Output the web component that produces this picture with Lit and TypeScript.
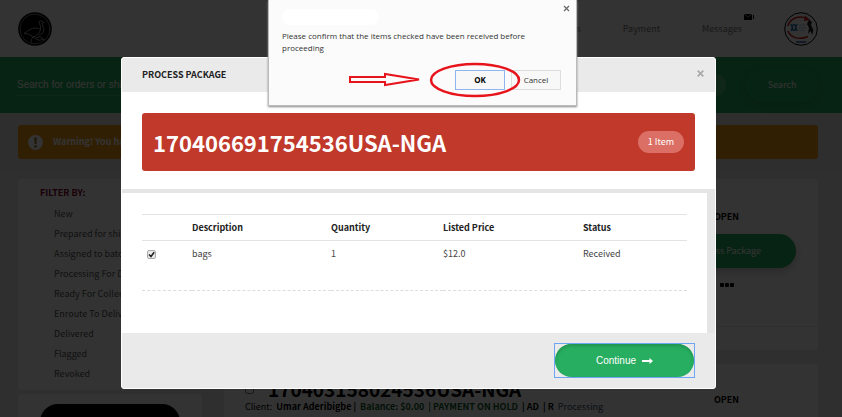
import { LitElement, html, css } from "lit";
import { customElement } from "lit/decorators.js";

const FILTERS = [
  "New",
  "Prepared for shipping",
  "Assigned to batch",
  "Processing For Delivery",
  "Ready For Collection",
  "Enroute To Delivery",
  "Delivered",
  "Flagged",
  "Revoked",
];

const base = css`
  :host {
    --sans: "Noto Sans CJK SC", "Noto Sans", sans-serif;
    --arial: "Liberation Sans", Arial, sans-serif;
    --green: #27ae60;
    font-family: var(--sans);
    box-sizing: border-box;
  }
  *,
  *::before,
  *::after {
    box-sizing: border-box;
  }
  button {
    font: inherit;
    cursor: pointer;
  }
`;

@customElement("order-page")
class OrderPage extends LitElement {
  static styles = [
    base,
    css`
      :host {
        display: block;
        background: #ececec;
        color: #222;
        font-size: 9px;
        line-height: 16px;
      }
      .top {
        display: flex;
        align-items: center;
        height: 57px;
        padding: 0 24px 0 18px;
        background: #fff;
      }
      .logo {
        display: block;
        width: 34px;
        height: 34px;
      }
      .links {
        display: flex;
        align-items: center;
        gap: 42px;
        margin-left: auto;
        margin-right: 42px;
      }
      .links a {
        position: relative;
        color: #777;
        text-decoration: none;
      }
      .mail {
        position: absolute;
        left: 100%;
        top: -7px;
        margin-left: 2px;
        width: 10px;
        height: 6px;
      }
      .search {
        display: flex;
        align-items: center;
        gap: 20px;
        height: 56px;
        padding: 0 24px 0 17px;
        background: var(--green);
      }
      .search input {
        flex: 1;
        min-width: 0;
        height: 21px;
        padding: 0;
        border: 0;
        border-bottom: 1px solid #4cbf7d;
        background: none;
        color: #fff;
        font: 10px/20px var(--arial);
      }
      .search input::placeholder {
        color: #fff;
        opacity: 1;
      }
      .round {
        width: 22px;
        height: 22px;
        padding: 0;
        border: 0;
        border-radius: 50%;
        background: #4cbf7d;
      }
      .go {
        width: 72px;
        height: 34px;
        padding: 0;
        border: 0;
        border-radius: 17px;
        background: var(--green);
        color: #fff;
        box-shadow: 0 3px 8px #22994f;
      }
      .notice {
        padding: 12px 24px 12px 18px;
        background: #e6e6e6;
      }
      .alert {
        display: flex;
        align-items: center;
        gap: 10px;
        height: 34px;
        padding: 0 10px;
        border-radius: 3px;
        background: #f39c12;
        color: #fff;
        font-weight: 700;
      }
      .bang {
        width: 15px;
        height: 15px;
      }
      .cols {
        display: grid;
        grid-template-columns: 184px minmax(0, 1fr) 183px;
        padding: 8px 24px 0 18px;
        align-items: start;
      }
      .stack {
        display: grid;
        gap: 4px;
      }
      .stack.wide {
        gap: 14px;
      }
      .card {
        background: #fff;
        border-radius: 3px;
      }
      .filters {
        height: 211px;
        padding: 6px 22px;
      }
      h2 {
        margin: 0;
        font-size: 9px;
        line-height: 16px;
        color: #800020;
      }
      ul {
        margin: 3px 0 0;
        padding: 0 0 0 14px;
        list-style: none;
      }
      li {
        height: 20px;
        line-height: 20px;
        white-space: nowrap;
      }
      li a {
        color: #555;
        text-decoration: none;
      }
      .create {
        padding: 10px 22px;
      }
      .dark {
        display: block;
        width: 100%;
        height: 36px;
        border: 0;
        border-radius: 18px;
        background: #000;
      }
      .order {
        margin-left: 22px;
        height: 260px;
        padding: 200px 21px 0;
      }
      .number {
        display: flex;
        align-items: center;
        gap: 14px;
        height: 20px;
      }
      .number input {
        margin: 0;
        width: 9px;
        height: 9px;
      }
      .number strong {
        font-size: 19px;
        line-height: 20px;
        color: #000;
      }
      .client {
        display: flex;
        gap: 4px;
        white-space: nowrap;
        font-weight: 700;
        color: #000;
      }
      .client .light {
        font-weight: 400;
      }
      .pay {
        color: #0b5a26;
      }
      .state {
        color: #34495e;
        font-weight: 400;
      }
      .side {
        display: grid;
        justify-items: center;
        align-content: start;
        padding: 30px 22px 0;
        color: #000;
      }
      .open {
        font-weight: 700;
        line-height: 16px;
      }
      .tall {
        height: 171px;
      }
      .rule {
        justify-self: stretch;
        height: 1px;
        margin: 39px -22px 0;
        background: #e6e6e6;
      }
      .short {
        height: 100px;
        padding-top: 28px;
      }
      .process {
        width: 100%;
        height: 34px;
        margin: 9px 0;
        padding: 0;
        border: 0;
        border-radius: 17px;
        background: var(--green);
        color: #fff;
        box-shadow: 0 4px 8px #ccc;
      }
      .dots {
        display: flex;
        gap: 1px;
        margin-top: 6px;
      }
      .dots i {
        width: 4px;
        height: 4px;
        border-radius: 1px;
        background: #000;
      }
    `,
  ];

  render() {
    return html`
      <header class="top">
        <svg class="logo" viewBox="0 0 34 34" fill="none" stroke="#aaa" stroke-width=".9" stroke-linecap="round" stroke-linejoin="round">
          <circle cx="17" cy="17" r="16.8" fill="#000" stroke="none" />
          <circle cx="17" cy="17" r="15" stroke-width=".7" />
          <path d="M26 10.500 24 9.800C23.600 8.200 21.300 8.200 21.200 10.200 21.200 12.500 23.600 14 22.500 17.500M24 11C24 13.500 26.500 15.500 25.500 19 24.800 21.500 23 22.500 21 23M22.500 17.500C20 15.500 15 15.500 12 17.500 9.500 19 7.500 20.500 6 21.500 9 21.500 11 22 13 23.500M22.500 17.500C22 21 18 24.500 15 25 13.500 27 13 28.500 13 30.500M13 23.500C16 25 18 28 21 28.200L26 27.500M18 26 22 24.500 26 27.500" />
        </svg>
        <nav class="links">
          <a href="#">Orders</a>
          <a href="#">Payment</a>
          <a href="#">Messages<svg class="mail" viewBox="0 0 10 6"><path d="M0 0H8V6H0ZM9 1H10V5H9Z" fill="#000" /><path d="M0 0 4 3 8 0" fill="none" stroke="#aaa" stroke-width=".8" /></svg></a>
        </nav>
        <svg class="logo" viewBox="0 0 34 34" fill="none">
          <circle cx="17" cy="17" r="16.300" fill="#fff" stroke="#000" />
          <path d="M4 14C6 6 15 3 23 6.500" stroke="#d0201c" stroke-width="1.500" />
          <path d="M21 3.500 26 8 20 9Z" fill="#d0201c" />
          <path d="M4 19C7 26.500 16 28 24 24.500" stroke="#d0201c" stroke-width="1.500" />
          <path d="M7 12 9.500 19M9.500 12 7 19M10.500 12 13 19M13 12 10.500 19" stroke="#146aa8" stroke-width="1.200" />
          <path d="M14.500 13H22M14.500 16H22M14.500 18.500H21" stroke="#9bbfd6" stroke-width=".8" />
          <path d="M25 7.500 28 10 27 13 29.500 18 28 23 26.500 19 24 22 25 16 23 12Z" fill="#222" />
          <path d="M12 30H22" stroke="#3b62a8" stroke-width="1.500" />
        </svg>
      </header>
      <form class="search">
        <input type="text" aria-label="Search" placeholder="Search for orders or shipments" />
        <button type="button" class="round" aria-label="Clear"></button>
        <button type="button" class="go">Search</button>
      </form>
      <section class="notice">
        <div class="alert">
          <svg class="bang" viewBox="0 0 15 15"><circle cx="7.500" cy="7.500" r="7.400" fill="#fff" /><path d="M6.300 2.500H8.700L8.300 9H6.700ZM6.400 10.200H8.600V12.400H6.400Z" fill="#9a650e" /></svg>
          <span>Warning! You have</span>
        </div>
      </section>
      <main class="cols">
        <div class="stack">
          <section class="card filters">
            <h2>FILTER BY:</h2>
            <ul>
              ${FILTERS.map((f) => html`<li><a href="#">${f}</a></li>`)}
            </ul>
          </section>
          <section class="card create">
            <button class="dark" type="button" aria-label="Create"></button>
          </section>
        </div>
        <section class="card order">
          <div class="number">
            <input type="checkbox" aria-label="Select order" />
            <strong>170403158024536USA-NGA</strong>
          </div>
          <div class="client">
            <span class="light">Client:</span><span>Umar Aderibigbe |</span>
            <span class="pay">Balance: $0.00</span>
            <span class="pay">| PAYMENT ON HOLD</span>
            <span>| AD</span><span>| R</span>
            <span class="state">Processing</span>
          </div>
        </section>
        <div class="stack wide">
          <section class="card side tall">
            <span class="open">OPEN</span>
            <button class="process" type="button">Process Package</button>
            <span class="dots"><i></i><i></i><i></i></span>
            <span class="rule"></span>
          </section>
          <section class="card side short"><span class="open">OPEN</span></section>
        </div>
      </main>
    `;
  }
}

@customElement("process-dialog")
class ProcessDialog extends LitElement {
  static styles = [
    base,
    css`
      :host {
        display: block;
        overflow: hidden;
        border: 1px solid #fff;
        border-radius: 3px;
        background: #fff;
        color: #222;
        font-size: 9px;
        line-height: 16px;
      }
      header {
        display: flex;
        align-items: center;
        justify-content: space-between;
        height: 34px;
        padding: 0 10px 0 20px;
        background: #eaeaea;
      }
      h1 {
        margin: 0;
        font-size: 9px;
        line-height: 16px;
      }
      .close {
        padding: 0 0 3px;
        border: 0;
        background: none;
      }
      .close svg {
        display: block;
        width: 9px;
        height: 9px;
      }
      .package {
        padding: 21px 20px 18px;
        border-bottom: 4px solid #e5e5e5;
      }
      .banner {
        display: flex;
        align-items: center;
        justify-content: space-between;
        height: 58px;
        padding: 0 11px;
        border-radius: 3px;
        background: #c0392b;
        color: #fff;
      }
      .banner strong {
        font-size: 22px;
        line-height: 32px;
      }
      .pill {
        padding: 3px 10px;
        border-radius: 11px;
        background: #db6f65;
      }
      .items {
        height: 140px;
        padding: 21px 20px 0;
        border-right: 8px solid #e5e5e5;
      }
      table {
        width: 100%;
        table-layout: fixed;
        border-collapse: collapse;
        text-align: left;
      }
      th,
      td {
        padding: 0;
      }
      th {
        height: 26px;
        border-top: 1px solid #e3e3e3;
        border-bottom: 1px solid #e3e3e3;
      }
      td {
        height: 50px;
        padding-top: 5px;
        vertical-align: top;
        border-bottom: 1px dashed #ddd;
        color: #444;
      }
      .pick {
        width: 50px;
      }
      .desc {
        width: 139px;
      }
      .qty {
        width: 112px;
      }
      .price {
        width: 140px;
      }
      .tick {
        position: relative;
        display: block;
      }
      .tick input {
        display: block;
        width: 9px;
        height: 9px;
        margin: 4px 0 0 5px;
        appearance: none;
        border: 1px solid #aaa;
        border-radius: 2px;
        background: #e8e8e8;
      }
      .tick svg {
        position: absolute;
        left: 5px;
        top: 0;
        width: 9px;
        height: 9px;
        pointer-events: none;
      }
      .tick input:not(:checked) + svg {
        display: none;
      }
      footer {
        display: flex;
        justify-content: flex-end;
        padding: 10px 20px;
        background: #eaeaea;
      }
      .focus {
        border: 1px solid #6ea6f5;
      }
      .continue {
        display: flex;
        align-items: center;
        justify-content: center;
        gap: 6px;
        width: 139px;
        height: 33px;
        padding: 0;
        border: 0;
        border-radius: 17px;
        background: var(--green);
        box-shadow: inset 0 2px 3px #219450;
        color: #fff;
        font: 10px/16px var(--arial);
      }
      .arrow {
        width: 11px;
        height: 6px;
      }
    `,
  ];

  render() {
    return html`
      <header>
        <h1>PROCESS PACKAGE</h1>
        <button class="close" type="button" aria-label="Close">
          <svg viewBox="0 0 8 8"><path d="M1.500 1.500 6.500 6.500M6.500 1.500 1.500 6.500" stroke="#aaa" stroke-width="1.600" /></svg>
        </button>
      </header>
      <section class="package">
        <div class="banner"><strong>170406691754536USA-NGA</strong><span class="pill">1 Item</span></div>
      </section>
      <section class="items">
        <table>
          <thead>
            <tr>
              <th class="pick"></th>
              <th class="desc">Description</th>
              <th class="qty">Quantity</th>
              <th class="price">Listed Price</th>
              <th>Status</th>
            </tr>
          </thead>
          <tbody>
            <tr>
              <td>
                <label class="tick">
                  <input type="checkbox" checked aria-label="bags" />
                  <svg viewBox="0 0 9 9"><path d="M2 4.500 4 6.500 7.200 2.200" fill="none" stroke="#222" stroke-width="1.600" /></svg>
                </label>
              </td>
              <td>bags</td>
              <td>1</td>
              <td>$12.0</td>
              <td>Received</td>
            </tr>
          </tbody>
        </table>
      </section>
      <footer>
        <div class="focus">
          <button class="continue" type="button">
            Continue
            <svg class="arrow" viewBox="0 0 11 6"><path d="M0 2H7.500V0L11 3 7.500 6V4H0Z" fill="#fff" /></svg>
          </button>
        </div>
      </footer>
    `;
  }
}

@customElement("confirm-box")
class ConfirmBox extends LitElement {
  static styles = [
    base,
    css`
      :host {
        display: block;
        padding: 2px 5px 15px 13px;
        border: 1px solid #bbb;
        border-top: 0;
        background: #fbfbfb;
        box-shadow: 0 1px 2px #888;
        color: #333;
        font: 8px/12px "Open Sans", "Noto Sans", sans-serif;
      }
      .bar {
        display: flex;
        justify-content: space-between;
        height: 28px;
      }
      .blank {
        width: 97px;
        height: 16px;
        margin-top: 7px;
        border-radius: 8px;
        background: #fff;
      }
      .x {
        width: 8px;
        height: 12px;
        padding: 0;
        border: 0;
        background: none;
      }
      .x svg {
        display: block;
        width: 7px;
        height: 7px;
      }
      p {
        margin: 0 40px 0 0;
      }
      .actions {
        display: flex;
        justify-content: flex-end;
        gap: 6px;
        margin: 16px 10px 0 0;
      }
      .actions button {
        width: 50px;
        height: 20px;
        padding: 0;
        border: 1px solid #ddd;
        background: #f8f8f8;
        color: #333;
      }
      .actions .ok {
        border-color: #8fb4ee;
        color: #000;
        font-weight: 700;
      }
    `,
  ];

  render() {
    return html`
      <div class="bar">
        <span class="blank"></span>
        <button class="x" type="button" aria-label="Close">
          <svg viewBox="0 0 7 7"><path d="M1 1 6 6M6 1 1 6" stroke="#666" stroke-width="1.200" /></svg>
        </button>
      </div>
      <p>Please confirm that the items checked have been received before proceeding</p>
      <div class="actions">
        <button class="ok" type="button">OK</button>
        <button type="button">Cancel</button>
      </div>
    `;
  }
}

@customElement("app-root")
class AppRoot extends LitElement {
  static styles = [
    base,
    css`
      :host {
        display: block;
        position: relative;
        height: 100vh;
        overflow: hidden;
      }
      .shade {
        position: absolute;
        inset: 0;
        padding: 57px 126px 0 121px;
        background: rgba(0, 0, 0, 0.8);
      }
      .confirm {
        position: absolute;
        top: 0;
        left: calc(50% - 153px);
        width: 309px;
      }
      .marks {
        position: absolute;
        left: 78px;
        top: 61px;
        width: 176px;
        height: 38px;
        pointer-events: none;
      }
    `,
  ];

  render() {
    return html`
      <order-page></order-page>
      <div class="shade">
        <process-dialog role="dialog" aria-label="Process package"></process-dialog>
      </div>
      <div class="confirm">
        <confirm-box role="alertdialog" aria-label="Confirm"></confirm-box>
        <svg class="marks" viewBox="0 0 176 38" fill="none" stroke="#e8141c" stroke-width="2">
          <path d="M4 16H39V13L73 18.500 39 24V21H4Z" />
          <ellipse cx="129" cy="19" rx="44" ry="16" stroke-width="2.500" />
        </svg>
      </div>
    `;
  }
}
